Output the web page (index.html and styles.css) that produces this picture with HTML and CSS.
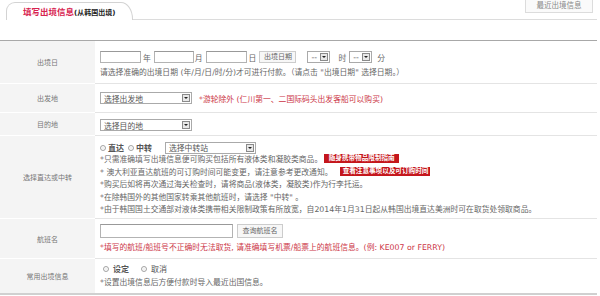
FILE: index.html
```html
<!DOCTYPE html>
<html lang="zh-CN">
<head>
  <meta charset="UTF-8"/>
  <title>填写出境信息</title>
  <link rel="stylesheet" href="styles.css">
</head>
<body>
<div class="wrap">
  <div class="head">
    <div class="tab"><span class="tab-title">填写出境信息</span><span class="tab-sub">(从韩国出境)</span></div>
    <div class="head-rest"><a class="recent" href="#">最近出境信息</a></div>
  </div>

  <table class="form">
    <tr class="r-date">
      <th>出境日</th>
      <td>
        <div class="line">
          <input class="inp w41" type="text"/><span class="unit">年</span>
          <input class="inp w40" type="text"/><span class="unit u-tight">月</span>
          <input class="inp w41" type="text"/><span class="unit">日</span>
          <button class="btn btn-date">出境日期</button>
          <span class="sel sel-mini ml11"><span class="sel-txt">--</span><span class="sel-arr"></span></span>
          <span class="unit ml8">时</span>
          <span class="sel sel-mini"><span class="sel-txt">--</span><span class="sel-arr"></span></span>
          <span class="unit ml5">分</span>
        </div>
        <div class="note">请选择准确的出境日期 (年/月/日/时/分)才可进行付款。（请点击 "出境日期" 选择日期。）</div>
      </td>
    </tr>
    <tr class="r-from">
      <th>出发地</th>
      <td>
        <div class="line">
          <span class="sel sel-wide"><span class="sel-txt">选择出发地</span><span class="sel-arr"></span></span>
          <span class="red ml7">*游轮除外 (仁川第一、二国际码头出发客船可以购买)</span>
        </div>
      </td>
    </tr>
    <tr class="r-to">
      <th>目的地</th>
      <td>
        <div class="line">
          <span class="sel sel-wide"><span class="sel-txt">选择目的地</span><span class="sel-arr"></span></span>
        </div>
      </td>
    </tr>
    <tr class="r-route">
      <th>选择直达或中转</th>
      <td>
        <div class="line radios">
          <span class="radio"></span><b class="rlabel">直达</b>
          <span class="radio"></span><b class="rlabel">中转</b>
          <span class="sel sel-via"><span class="sel-txt">选择中转站</span><span class="sel-arr"></span></span>
        </div>
        <div class="bul">*只需准确填写出境信息便可购买包括所有液体类和凝胶类商品。<span class="badge b1">随身携带物品限制指南</span></div>
        <div class="bul">* 澳大利亚直达航班的可订购时间可能变更，请注意参考更改通知。<span class="badge b2">查看注意事项以及可订购时间</span></div>
        <div class="bul">*购买后如将再次通过海关检查时，请将商品(液体类，凝胶类)作为行李托运。</div>
        <div class="bul">*在除韩国外的其他国家转乘其他航班时，请选择 "中转" 。</div>
        <div class="bul">*由于韩国国土交通部对液体类携带相关限制政策有所放宽，自2014年1月31日起从韩国出境直达美洲时可在取货处领取商品。</div>
      </td>
    </tr>
    <tr class="r-flight">
      <th>航班名</th>
      <td>
        <div class="line">
          <input class="inp inp-flight" type="text"/>
          <button class="btn btn-flight">查询航班名</button>
        </div>
        <div class="note red">*填写的航班/船班号不正确时无法取货, 请准确填写机票/船票上的航班信息。(例: KE007 or FERRY)</div>
      </td>
    </tr>
    <tr class="r-fav">
      <th>常用出境信息</th>
      <td>
        <div class="line radios radios-wide">
          <span class="radio"></span><b class="rlabel">设定</b>
          <span class="radio"></span><span class="rlabel">取消</span>
        </div>
        <div class="note">*设置出境信息后方便付款时导入最近出国信息。</div>
      </td>
    </tr>
  </table>
</div>
</body>
</html>
```

FILE: styles.css
```css
* { box-sizing: border-box; margin:0; padding:0; }
body { font-family: "DejaVu Sans", "Noto Sans CJK SC", sans-serif; font-size:7.8px; color:#666; background:#fff; }
.wrap { width:597px; }

/* header tab */
.head { display:flex; align-items:flex-end; height:20px; }
.tab { margin-left:6px; width:127px; height:18px; border:1px solid #d3d3d3; border-bottom:0; border-radius:9px 12px 0 0 / 9px 17px 0 0; padding:4px 0 0 16px; white-space:nowrap; line-height:11px; }
.tab-title { color:#d7224f; font-weight:bold; font-size:8.5px; }
.tab-sub { color:#222; font-weight:bold; font-size:7px; }
.head-rest { flex:1; height:20px; border-bottom:1px solid #dcdcdc; display:flex; justify-content:flex-end; align-items:flex-start; }
.recent { margin-right:4px; width:68px; height:13px; border:1px solid #dcdcdc; border-top:0; background:#fafafa; color:#888; font-size:7.5px; line-height:12px; text-align:center; text-decoration:none; }

/* form table */
.form { margin-top:20px; width:597px; border-collapse:separate; border-spacing:0; border-top:1px solid #a8a8a8; border-bottom:2px solid #d0d0d0; }
.form th { width:95px; background:#f4f4f4; color:#777; font-weight:normal; font-size:7px; text-align:center; vertical-align:middle; border-bottom:1px solid #fff; }
.form td { padding:0 5px; vertical-align:top; border-bottom:1px solid #e4e4e4; white-space:nowrap; }
.form tr:last-child th, .form tr:last-child td { border-bottom:0; }

.r-date td { padding-top:9px; padding-bottom:4px; }
.r-from td { padding-top:8px; padding-bottom:8px; }
.r-to td { padding-top:6px; padding-bottom:4px; }
.r-route td { padding-top:5px; padding-bottom:1.5px; }
.r-flight td { padding-top:5px; padding-bottom:4px; }
.r-fav td { padding-top:3px; padding-bottom:4px; }

.line { display:flex; align-items:center; height:14px; }
.r-from .line, .r-to .line { height:12px; }
.radios { height:13px; }
.note { margin-top:3px; line-height:12px; }
.r-flight .note { margin-top:4px; }
.r-fav .note { margin-top:2px; }
.red { color:#cc3546; }

.unit { margin:0 3px 0 2px; }
.u-tight { margin-left:1px; }
.ml5 { margin-left:5px; }
.ml7 { margin-left:7px; }
.ml8 { margin-left:8px; }
.ml11 { margin-left:11px; }

/* fields */
.inp { height:12px; border:1px solid #b3b3b3; border-top-color:#999; background:#fff; }
.w40 { width:40px; }
.w41 { width:41px; }
.inp-flight { width:133px; height:14px; }
.btn { height:12px; border:1px solid #ccc; background:#f7f7f7; color:#666; font-family:inherit; font-size:7px; line-height:10px; }
.btn-date { width:37px; }
.btn-flight { width:46px; height:14px; margin-left:4px; }

.sel { display:inline-flex; align-items:center; justify-content:space-between; height:12px; padding-left:3px; border:1px solid #aaa; background:#fff; color:#555; }
.sel-mini { width:23px; }
.sel-wide { width:92px; }
.sel-via { width:91px; margin-left:9px; }
.sel-arr { display:flex; align-items:center; justify-content:center; width:8px; height:8px; margin-right:1px; border:1px solid #8a8a8a; background:#e8e8e8; }
.sel-arr::after { content:""; border-left:2px solid transparent; border-right:2px solid transparent; border-top:2.5px solid #222; }

.radio { width:6px; height:6px; border:1px solid #a5a5a5; border-radius:50%; background:#eee; box-shadow:inset 0 0 0 1px #fff; }
.rlabel { margin:0 4px 0 2px; color:#555; font-size:8px; }
.radios-wide .radio { margin-left:3px; }
.radios-wide .rlabel { margin:0 9px 0 4px; }

.bul { line-height:12.5px; }
.badge { display:inline-block; vertical-align:middle; height:9px; line-height:9px; text-align:center; background:#c4161c; color:#fff; font-weight:bold; font-size:6.6px; margin-top:-2px; }
.b1 { width:75px; margin-left:2px; }
.b2 { width:90px; margin-left:8px; }
```
